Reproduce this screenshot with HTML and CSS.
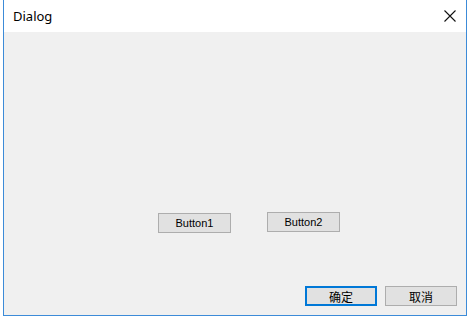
FILE: index.html
```html
<!DOCTYPE html>
<html lang="zh">
<head>
    <meta charset="UTF-8">
    <title>Dialog</title>
    <link rel="stylesheet" href="styles.css">
</head>
<body>
    <div class="window">
        <div class="titlebar">
            <span class="title">Dialog</span>
            <svg class="close" width="12" height="12" viewBox="0 0 12 12">
                <path d="M0.5 0.5 L11.5 11.5 M11.5 0.5 L0.5 11.5" stroke="#111" stroke-width="1.1"/>
            </svg>
        </div>
        <div class="content">
            <div class="middle">
                <button class="btn btn-one">Button1</button>
                <button class="btn btn-two">Button2</button>
            </div>
            <div class="footer">
                <button class="btn btn-default">确定</button>
                <button class="btn">取消</button>
            </div>
        </div>
    </div>
</body>
</html>
```

FILE: styles.css
```css
body {
    margin: 0;
    padding: 0;
    background-color: #fff;
    font-family: "Noto Sans CJK SC", "Liberation Sans", sans-serif;
}
.window {
    width: 462px;
    height: 315px;
    margin-left: 3px;
    border: 1px solid #3c8bd8;
    border-top: none;
    display: flex;
    flex-direction: column;
    background-color: #f0f0f0;
}
.titlebar {
    height: 32px;
    background-color: #fff;
    display: flex;
    align-items: center;
    justify-content: space-between;
    padding: 0 8px 0 9px;
}
.title {
    font-family: "Noto Sans", "Liberation Sans", sans-serif;
    font-size: 13px;
    color: #000;
}
.close {
    margin-right: 2px;
}
.content {
    flex: 1;
}
.btn {
    box-sizing: border-box;
    height: 20px;
    width: 73px;
    padding: 0;
    background-color: #e1e1e1;
    border: 1px solid #adadad;
    font-family: "Liberation Sans", "Noto Sans CJK SC", sans-serif;
    font-size: 11px;
    color: #000;
}
.middle {
    display: flex;
    gap: 36px;
    padding: 180px 0 0 154px;
    align-items: flex-start;
}
.btn-one {
    margin-top: 1px;
}
.footer {
    display: flex;
    justify-content: flex-end;
    gap: 8px;
    padding: 53px 9px 0 0;
}
.footer .btn {
    width: 72px;
    height: 20px;
    font-family: "Noto Sans CJK SC", sans-serif;
    font-size: 12px;
}
.btn-default {
    border: 2px solid #0078d7;
}
```
